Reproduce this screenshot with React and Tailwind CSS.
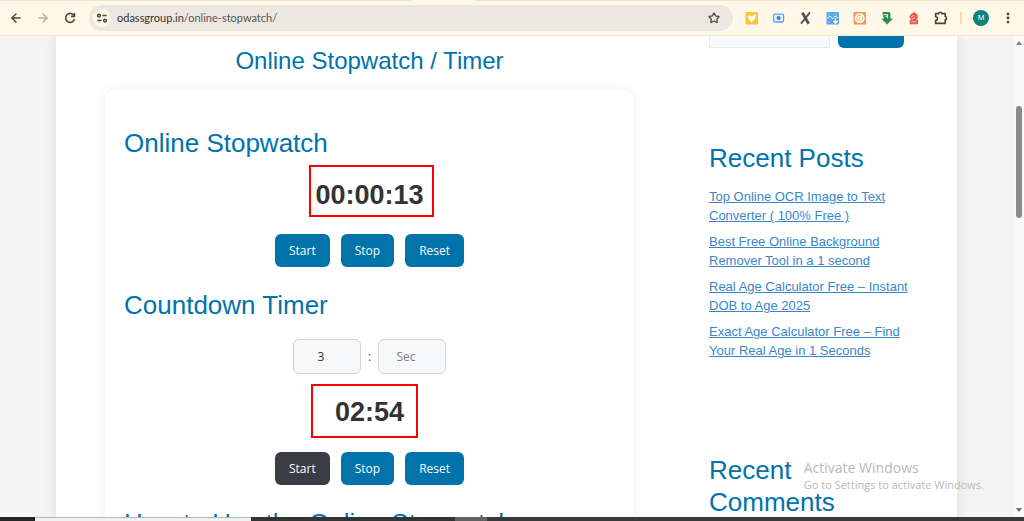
import { useState } from 'react';
import { ArrowLeft, ArrowRight, EllipsisVertical, Star } from 'lucide-react';

const recentPosts = [
  'Top Online OCR Image to Text Converter ( 100% Free )',
  'Best Free Online Background Remover Tool in a 1 second',
  'Real Age Calculator Free – Instant DOB to Age 2025',
  'Exact Age Calculator Free – Find Your Real Age in 1 Seconds',
];

const headingClass = 'text-[26px] leading-8 text-[#0073aa]';

function ReloadIcon() {
  return (
    <svg viewBox="0 0 16 16" className="w-4 h-4" fill="none" stroke="#4a453e" strokeWidth="1.6">
      <path d="M12 5.6A4.5 4.5 0 1 0 12.5 9" />
      <path d="M12.4 3v3.4H9" />
    </svg>
  );
}

function SiteInfoIcon() {
  return (
    <svg viewBox="0 0 16 16" className="w-4 h-4" fill="none" stroke="#4a453e" strokeWidth="1.5">
      <circle cx="5" cy="5.6" r="1.4" />
      <path d="M8.4 5.6H12.6M3.4 10.6h4.2" />
      <circle cx="11" cy="10.6" r="1.4" />
    </svg>
  );
}

function HeartNoteIcon() {
  return (
    <svg viewBox="0 0 16 16" className="w-4 h-4">
      <rect x="1.5" y="2" width="12.5" height="12.5" rx="1" fill="#fcc63d" />
      <path d="M7.7 12 4.3 8.6a1.9 1.9 0 0 1 3-2.4l.4.5.4-.5a1.9 1.9 0 0 1 3 2.4z" fill="#fff" />
      <path d="M9.5 5.2 11.9 4l-.6 2.4z" fill="#fff" />
    </svg>
  );
}

function CameraIcon() {
  return (
    <svg viewBox="0 0 16 16" className="w-4 h-4">
      <rect x="2.6" y="4.2" width="10" height="7.8" rx="1.4" fill="#e9f3ff" stroke="#5aa2f2" strokeWidth="1.3" />
      <circle cx="7.6" cy="8.1" r="2" fill="#2f7fe0" />
    </svg>
  );
}

function XIcon() {
  return (
    <svg viewBox="0 0 16 16" className="w-4 h-4" fill="none" stroke="#505050">
      <path d="M4.4 2.6 10.6 13.8" strokeWidth="2.8" />
      <path d="M12 2.4 3 13.6" strokeWidth="1.8" />
    </svg>
  );
}

function ImageSaveIcon() {
  return (
    <svg viewBox="0 0 16 16" className="w-4 h-4">
      <rect x="1.5" y="2" width="12.5" height="12.5" rx="1" fill="#58a8ee" />
      <path d="m2 8.5 3-2.5 3 3 2-3 3.5 2" fill="none" stroke="#d9edff" strokeWidth="1" />
      <path d="M3.5 4h1M10.5 4h1M3.5 12h1" stroke="#d9edff" strokeWidth="1.2" />
      <path d="M10.5 8.5v4M8.5 11l2 2.2 2-2.2" fill="none" stroke="#fff" strokeWidth="1.5" />
    </svg>
  );
}

function TargetIcon() {
  return (
    <svg viewBox="0 0 16 16" className="w-4 h-4">
      <rect x="1.5" y="2" width="12.5" height="12.5" rx="1" fill="#f3955c" />
      <circle cx="7.7" cy="8.2" r="5" fill="#fff" />
      <circle cx="7.7" cy="8.2" r="3" fill="none" stroke="#e8bd6a" strokeWidth="1" />
      <circle cx="7.7" cy="8.2" r="1" fill="#e8bd6a" />
    </svg>
  );
}

function GreenArrowIcon() {
  return (
    <svg viewBox="0 0 16 16" className="w-4 h-4">
      <path d="M3.6 2h6.8l1 1v5.6H14l-5.8 5.8L2.2 8.6H5V7.4L3.6 6l1.6-1.6H3.6z" fill="#27904a" />
      <path d="M5 4.6h3.6v3.8M8.4 6.2H6.4" fill="none" stroke="#fff8e8" strokeWidth=".9" />
    </svg>
  );
}

function RedKnightIcon() {
  return (
    <svg viewBox="0 0 16 16" className="w-4 h-4">
      <path d="M8 1.6 9.2 3c2 .5 3.2 2.4 2.6 4.4l-1.6 2.4h1.8v4.4H3.6V9.8h2L3.4 7.4C3.6 5 5.4 3.4 7.2 3z" fill="#f4574d" />
      <path d="m5.2 7 2.8-1.8M6 9.2l3-2.2M5.2 11.8h5" stroke="#ffd9b8" strokeWidth=".9" />
    </svg>
  );
}

function PuzzleIcon() {
  return (
    <svg viewBox="0 0 16 16" className="w-4 h-4" fill="none" stroke="#4a453e" strokeWidth="1.6" strokeLinejoin="round">
      <path d="M2.6 3.6h3.2a1.5 1.3 0 0 1 3 0h3.4v3.2a1.3 1.5 0 0 1 0 3v3.6H2.6v-3a1.8 1.8 0 0 0 0-3.6z" />
    </svg>
  );
}

const extensions = [
  { name: 'Notes', Icon: HeartNoteIcon },
  { name: 'Camera', Icon: CameraIcon },
  { name: 'X', Icon: XIcon },
  { name: 'Image saver', Icon: ImageSaveIcon },
  { name: 'Target', Icon: TargetIcon },
  { name: 'Downloader', Icon: GreenArrowIcon },
  { name: 'Knight', Icon: RedKnightIcon },
  { name: 'Extensions', Icon: PuzzleIcon },
];

function BrowserBar() {
  return (
    <header className="shrink-0 bg-[#fff8e8] border-b border-[#f0e6d4]">
      {/* Bottom edge of the tab strip, open under the active tab */}
      <div className="flex h-px">
        <div className="w-[412px] bg-[#f3e7c3]" />
        <div className="w-[63px]" />
        <div className="flex-1 bg-[#f3e7c3]" />
      </div>
      <div className="flex items-center gap-[11px] px-2 h-[34px]">
        <button aria-label="Back">
          <ArrowLeft className="w-4 h-4 p-px text-[#4a453e]" strokeWidth={2.5} />
        </button>
        <button aria-label="Forward">
          <ArrowRight className="w-4 h-4 p-px text-[#b5afa5]" strokeWidth={2.5} />
        </button>
        <button aria-label="Reload">
          <ReloadIcon />
        </button>
        <div className="flex flex-1 items-center gap-1.5 h-[26px] pl-1 pr-[11px] rounded-full bg-[#ece8e1]">
          <button
            aria-label="Site information"
            className="flex items-center justify-center w-[18px] h-[18px] rounded-full bg-[#fff8e8]"
          >
            <SiteInfoIcon />
          </button>
          <p className="flex-1 font-[Lato,sans-serif] text-[11px] text-[#5b564f]">
            <span className="text-[#35322d]">odassgroup.in</span>/online-stopwatch/
          </p>
          <button aria-label="Bookmark">
            <Star className="w-4 h-4 p-0.5 text-[#4a453e]" strokeWidth={2.5} />
          </button>
        </div>
        {extensions.map(({ name, Icon }) => (
          <button key={name} aria-label={name}>
            <Icon />
          </button>
        ))}
        <div className="w-0.5 h-3 bg-[#f7dcae]" />
        <button className="w-4 h-4 rounded-full bg-[#0b8577] text-[8px] text-white">M</button>
        <button aria-label="Menu">
          <EllipsisVertical className="w-4 h-4 p-px text-[#4a453e]" strokeWidth={3} />
        </button>
      </div>
    </header>
  );
}

function ControlButtons({ active }) {
  return (
    <div className="flex justify-center gap-[11px] font-['Open_Sans',sans-serif] text-xs text-white">
      {['Start', 'Stop', 'Reset'].map((label) => (
        <button
          key={label}
          className={`h-[33px] px-3.5 rounded-md ${
            active === label ? 'bg-[#3b3d44]' : 'bg-[#0073aa]'
          }`}
        >
          {label}
        </button>
      ))}
    </div>
  );
}

function TimeInput({ label, ...props }) {
  return (
    <input
      aria-label={label}
      placeholder={label}
      inputMode="numeric"
      className="w-[68px] h-[35px] pr-3 rounded-md border border-[#d3d3d6] bg-[#f7f8fa] text-center text-[#333] placeholder:text-[#7d7d7d]"
      {...props}
    />
  );
}

function StopwatchCard() {
  const [minutes, setMinutes] = useState('3');
  const [seconds, setSeconds] = useState('');

  return (
    <section className="mt-[13px] px-[19px] pt-[37px] rounded-[10px] shadow-[0_0_10px_rgba(0,0,0,0.07)]">
      <h2 className={headingClass}>Online Stopwatch</h2>
      <div className="flex justify-center mt-[18px] mb-[21px]">
        <div className="relative">
          <p className="text-[27px] leading-9 font-bold text-[#333]">00:00:13</p>
          <div className="absolute -left-1.5 -right-2.5 -top-3 -bottom-1 border-2 border-[#fb0007]" />
        </div>
      </div>
      <ControlButtons />

      <h2 className={`mt-[22px] ${headingClass}`}>Countdown Timer</h2>
      <div className="flex items-center justify-center gap-[7px] mt-[18px] font-['Open_Sans',sans-serif] text-xs text-[#555]">
        <TimeInput label="Min" value={minutes} onChange={(e) => setMinutes(e.target.value)} />
        <span>:</span>
        <TimeInput label="Sec" value={seconds} onChange={(e) => setSeconds(e.target.value)} />
      </div>
      <div className="flex justify-center mt-5 mb-[22px]">
        <div className="relative">
          <p className="text-[27px] leading-9 font-bold text-[#333]">02:54</p>
          <div className="absolute -left-6 -right-3.5 -top-2.5 -bottom-2 border-2 border-[#fb0007]" />
        </div>
      </div>
      <ControlButtons active="Start" />

      <h2 className={`mt-[22px] whitespace-nowrap ${headingClass}`}>How to Use the Online Stopwatch</h2>
    </section>
  );
}

function Sidebar() {
  return (
    <aside className="w-[200px] shrink-0">
      <form className="flex gap-2 -mt-6 h-9 pr-[5px]">
        <input
          aria-label="Search"
          className="flex-1 min-w-0 border border-[#e9eaed] bg-[#f7f8fa] px-2 text-xs"
        />
        <button aria-label="Submit search" className="w-[66px] rounded-md bg-[#0073aa]" />
      </form>
      <h2 className={`mt-[94px] ${headingClass}`}>Recent Posts</h2>
      <ul className="flex flex-col gap-[7px] mt-[13px] text-[13px] leading-[19px]">
        {recentPosts.map((post) => (
          <li key={post}>
            <a href="#" className="text-[#3a86c8] underline">
              {post}
            </a>
          </li>
        ))}
      </ul>
      <h2 className={`mt-[94px] ${headingClass}`}>Recent Comments</h2>
    </aside>
  );
}

function Scrollbar() {
  return (
    <div className="flex flex-col items-center shrink-0 w-2.5 py-[5px] bg-[#fafafa]">
      <svg viewBox="0 0 6 4" className="w-1.5 h-1">
        <path d="M0 4 3 0l3 4z" fill="#7d7d7d" />
      </svg>
      <div className="w-1.5 h-28 mt-[61px] rounded-full bg-[#8b8b8b]" />
      <svg viewBox="0 0 6 4" className="w-1.5 h-1 mt-auto">
        <path d="m0 0 3 4 3-4z" fill="#6d6d6d" />
      </svg>
    </div>
  );
}

function TaskbarEdge() {
  return (
    <footer className="flex shrink-0 h-1 bg-[#39383a]">
      <div className="w-[35px] bg-[#262425]" />
      <div className="w-[216px] bg-[#f1f1f1] border-t border-[#b5b5b5]" />
      <div className="w-[204px] bg-[#333]" />
      <div className="w-8 bg-[#626262]" />
    </footer>
  );
}

function App() {
  return (
    <div className="flex flex-col h-screen overflow-hidden font-['Liberation_Sans',Arial,sans-serif]">
      <BrowserBar />
      <div className="relative flex flex-1 min-h-0 overflow-hidden bg-[#f4f4f4]">
        <main className="flex flex-1 gap-[75px] ml-14 mr-[57px] pl-[49px] pr-12 bg-white shadow-[0_0_12px_rgba(0,0,0,0.1)]">
          <div className="flex-1 min-w-0 pt-[9px]">
            <h1 className="text-2xl leading-8 text-center text-[#0073aa]">Online Stopwatch / Timer</h1>
            <StopwatchCard />
          </div>
          <Sidebar />
        </main>
        <Scrollbar />

        {/* Windows activation watermark */}
        <div className="absolute right-10 bottom-6 font-['Open_Sans',sans-serif] text-[#b9b9b9]">
          <p className="text-sm leading-[18px]">Activate Windows</p>
          <p className="text-[11px] leading-4">Go to Settings to activate Windows.</p>
        </div>
      </div>
      <TaskbarEdge />
    </div>
  );
}

export default App;
